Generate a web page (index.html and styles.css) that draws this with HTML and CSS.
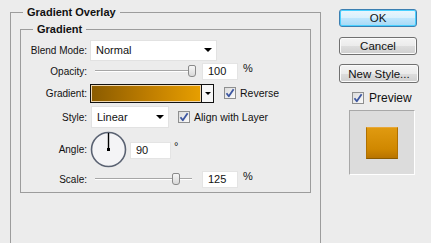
FILE: index.html
```html
<!DOCTYPE html>
<html>
<head>
<meta charset="utf-8">
<link rel="stylesheet" href="styles.css">
</head>
<body>
<div class="dialog">
  <fieldset class="group outer">
    <legend class="legend legend-outer">Gradient Overlay</legend>
    <fieldset class="group inner">
      <legend class="legend legend-inner">Gradient</legend>
      <div class="form">
        <span class="lbl">Blend Mode:</span>
        <div class="ctl">
          <div class="select select-blend">Normal<span class="arrow"></span></div>
        </div>

        <span class="lbl">Opacity:</span>
        <div class="ctl">
          <div class="slider"><span class="thumb" style="left:93px"></span></div>
          <div class="field field-pct">100</div>
          <span class="unit">%</span>
        </div>

        <span class="lbl">Gradient:</span>
        <div class="ctl">
          <div class="gradient"></div>
          <div class="grad-drop"><span class="arrow arrow-small"></span></div>
          <span class="check check-rev"><svg width="10" height="10" viewBox="0 0 10 10"><path d="M1.5 5.2 L3.8 8.2 L8.6 1.2" fill="none" stroke="#3c56a0" stroke-width="1.8" stroke-linejoin="round"/></svg></span>
          <span class="check-lbl">Reverse</span>
        </div>

        <span class="lbl">Style:</span>
        <div class="ctl">
          <div class="select select-style">Linear<span class="arrow"></span></div>
          <span class="check check-align"><svg width="10" height="10" viewBox="0 0 10 10"><path d="M1.5 5.2 L3.8 8.2 L8.6 1.2" fill="none" stroke="#3c56a0" stroke-width="1.8" stroke-linejoin="round"/></svg></span>
          <span class="check-lbl">Align with Layer</span>
        </div>

        <span class="lbl">Angle:</span>
        <div class="ctl">
          <svg class="dial" width="37" height="37" viewBox="0 0 37 37">
            <circle cx="18.5" cy="18.5" r="17" fill="#f4f4f6" stroke="#5a6272" stroke-width="1.6"/>
            <line x1="18.5" y1="2" x2="18.5" y2="18.5" stroke="#000" stroke-width="1.4"/>
            <rect x="17" y="17" width="3" height="3" fill="#000"/>
          </svg>
          <div class="field field-angle">90</div>
          <span class="unit unit-deg">°</span>
        </div>

        <span class="lbl">Scale:</span>
        <div class="ctl">
          <div class="slider"><span class="thumb" style="left:77px"></span></div>
          <div class="field field-pct">125</div>
          <span class="unit">%</span>
        </div>
      </div>
    </fieldset>
  </fieldset>

  <div class="side">
    <button class="btn btn-ok">OK</button>
    <button class="btn btn-cancel">Cancel</button>
    <button class="btn btn-new">New Style...</button>
    <div class="preview-row">
      <span class="check"><svg width="10" height="10" viewBox="0 0 10 10"><path d="M1.5 5.2 L3.8 8.2 L8.6 1.2" fill="none" stroke="#3c56a0" stroke-width="1.8" stroke-linejoin="round"/></svg></span>
      <span class="preview-lbl">Preview</span>
    </div>
    <div class="preview-box"><div class="swatch"></div></div>
  </div>
</div>
</body>
</html>
```
FILE: styles.css
```css
html, body {
  margin: 0;
  padding: 0;
}
body {
  width: 431px;
  height: 243px;
  overflow: hidden;
  background: #ececec;
  font-family: "Liberation Sans", Arial, sans-serif;
  font-size: 10px;
  color: #111;
}
.dialog {
  display: flex;
  align-items: flex-start;
  padding: 6px 0 0 10px;
  height: 237px;
  overflow: hidden;
}
.group {
  margin: 0;
  border: 1px solid #9c9c9c;
  min-width: 0;
}
.outer {
  width: 311px;
  height: 250px;
  flex: none;
  box-sizing: border-box;
  padding: 4px 9px 0 9px;
}
.inner {
  padding: 4px 0 2px 0;
}
.legend {
  font-weight: bold;
  font-size: 11px;
  line-height: 13px;
  padding: 0 4px;
  color: #111;
}
.legend-outer { margin-left: 3px; }
.legend-inner { margin-left: 12px; }

.form {
  display: grid;
  grid-template-columns: 66px 1fr;
  column-gap: 3px;
  grid-template-rows: 20px 22px 22px 26px 38px 22px;
  align-items: center;
}
.lbl {
  text-align: right;
  white-space: nowrap;
}
.ctl {
  display: flex;
  align-items: center;
  height: 100%;
}
.select {
  position: relative;
  box-sizing: border-box;
  background: #fff;
  border: 1px solid #e2e2e2;
  display: flex;
  align-items: center;
  padding-left: 5px;
  font-size: 11px;
}
.select-blend {
  width: 127px;
  height: 21px;
}
.select-style {
  width: 78px;
  height: 22px;
  margin-left: 1px;
}
.arrow {
  width: 0;
  height: 0;
  border-left: 4px solid transparent;
  border-right: 4px solid transparent;
  border-top: 4px solid #000;
  margin-left: auto;
  margin-right: 4px;
}
.arrow-small {
  border-left-width: 3px;
  border-right-width: 3px;
  border-top-width: 3px;
  margin: 0;
}

.slider {
  position: relative;
  width: 97px;
  height: 2px;
  margin-left: 5px;
  border-top: 1px solid #a6a6a6;
  border-bottom: 1px solid #fff;
  box-sizing: border-box;
}
.thumb {
  position: absolute;
  top: -6px;
  width: 6px;
  height: 10px;
  background: linear-gradient(#f6f6f6, #d8d8d8);
  border: 1px solid #8a8a8a;
  border-radius: 2px 2px 3px 3px;
}
.field {
  box-sizing: border-box;
  background: #fff;
  border: 1px solid #e4e4e4;
  height: 17px;
  display: flex;
  align-items: center;
  padding-left: 5px;
  font-size: 11px;
}
.field-pct {
  width: 36px;
  margin-left: 10px;
}
.unit {
  margin-left: 5px;
  font-size: 11px;
  align-self: flex-start;
  margin-top: 2px;
}
.field-angle {
  width: 41px;
  margin-left: 3px;
  margin-top: 2px;
}
.unit-deg {
  margin-left: 3px;
  margin-top: 10px;
}
.dial {
  display: block;
}
.gradient {
  box-sizing: border-box;
  width: 112px;
  height: 19px;
  border: 1px solid #111;
  background: linear-gradient(to right, #8a5b00, #c17f00 55%, #e79f00);
  box-shadow: inset 0 0 0 1px #f0d8b0;
}
.grad-drop {
  box-sizing: border-box;
  width: 12px;
  height: 19px;
  border: 1px solid #111;
  border-left: none;
  background: #f7f7f7;
  display: flex;
  align-items: center;
  justify-content: center;
}
.check {
  box-sizing: border-box;
  width: 12px;
  height: 12px;
  border: 1px solid #8e8f8f;
  background: linear-gradient(135deg, #dcdcdc, #fafafa);
  display: inline-flex;
  align-items: center;
  justify-content: center;
  flex: none;
}
.check-rev { margin-left: 10px; }
.check-align { margin-left: 9px; }
.check-lbl {
  margin-left: 4px;
  font-size: 10.5px;
}

.side {
  display: flex;
  flex-direction: column;
  margin-left: 18px;
  width: 78px;
  margin-top: 3px;
}
.btn {
  font-family: "Liberation Sans", Arial, sans-serif;
  font-size: 11.5px;
  color: #111;
  height: 18px;
  padding: 0;
  border: 1px solid #707070;
  border-radius: 3px;
  background: linear-gradient(#f4f4f4 0%, #ebebeb 50%, #dddddd 51%, #cfcfcf 100%);
  box-shadow: inset 0 0 0 1px #fbfbfb;
}
.btn-ok {
  border-color: #3c7fb1;
  background: linear-gradient(#eaf6fd 0%, #d9f0fc 50%, #bee6fd 51%, #a7d9f5 100%);
  box-shadow: inset 0 0 0 1px #48d0ff;
}
.btn-cancel { margin-top: 10px; }
.btn-new {
  margin-top: 9px;
  height: 19px;
  width: 80px;
}
.preview-row {
  display: flex;
  align-items: center;
  margin-top: 8px;
  padding-left: 13px;
  height: 13px;
}
.preview-lbl {
  margin-left: 5px;
  font-size: 12px;
}
.preview-box {
  box-sizing: border-box;
  margin-top: 6px;
  margin-left: 10px;
  width: 66px;
  height: 65px;
  background: #dcdcdc;
  border: 1px solid;
  border-color: #a8a8a8 #ffffff #ffffff #a8a8a8;
  display: flex;
  align-items: center;
  justify-content: center;
}
.swatch {
  width: 32px;
  height: 32px;
  box-sizing: border-box;
  background: linear-gradient(#e09a10, #d08800 70%, #b87400);
  border: 1px solid #b07000;
  border-bottom-color: #8a5a00;
  border-top-color: #e8a838;
}
```
